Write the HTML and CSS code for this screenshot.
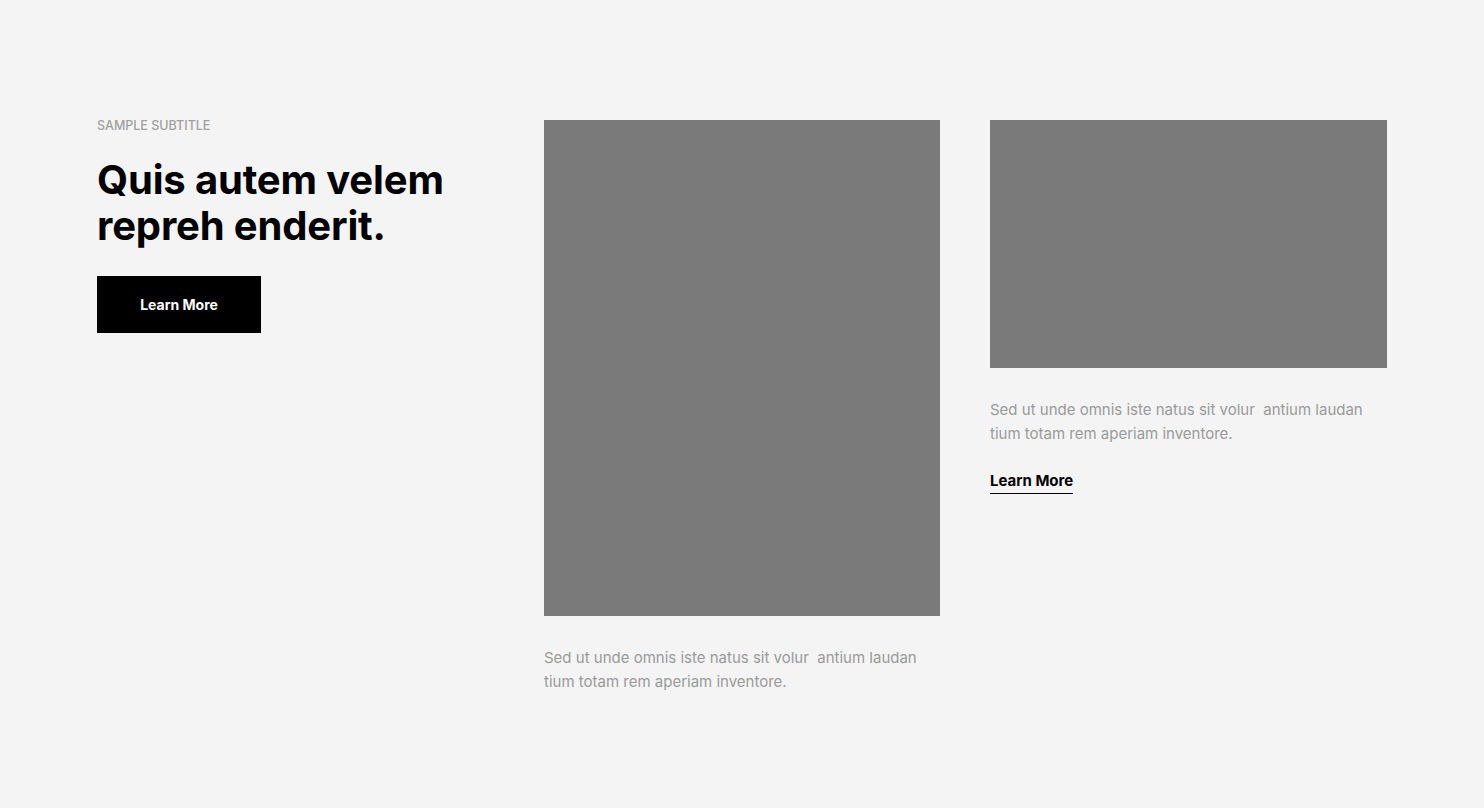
FILE: index.html
```html
<!DOCTYPE html>
<html lang="en">
<head>
<meta charset="utf-8">
<title>Section</title>
<link rel="stylesheet" href="styles.css">
</head>
<body>
<section class="section">
  <div class="intro">
    <p class="subtitle">SAMPLE SUBTITLE</p>
    <h1 class="title">Quis autem velem repreh enderit.</h1>
    <a class="btn" href="#">Learn More</a>
  </div>
  <div class="card">
    <div class="media media-tall"></div>
    <p class="card-text">Sed ut unde omnis iste natus sit volur&nbsp; antium laudan tium totam rem aperiam inventore.</p>
  </div>
  <div class="card">
    <div class="media media-short"></div>
    <p class="card-text">Sed ut unde omnis iste natus sit volur&nbsp; antium laudan tium totam rem aperiam inventore.</p>
    <a class="link" href="#">Learn More</a>
  </div>
</section>
</body>
</html>
```

FILE: styles.css
```css
* { box-sizing: border-box; }
html, body { margin: 0; padding: 0; }
body {
  background: #f4f4f4;
  font-family: Inter, "Noto Sans", sans-serif;
  color: #000;
  width: 1484px;
  height: 808px;
  overflow: hidden;
}
.section {
  display: grid;
  grid-template-columns: 397px 396px 397px;
  column-gap: 50px;
  padding: 120px 97px 0;
  align-items: start;
}
.intro { display: flex; flex-direction: column; align-items: flex-start; }
.subtitle {
  margin: 0;
  font-size: 12.5px;
  line-height: 12px;
  font-weight: 500;
  color: #a0a0a0;
}
.title {
  margin: 25px 0 0;
  font-size: 40px;
  line-height: 46px;
  font-weight: 700;
  letter-spacing: -0.15px;
  width: 390px;
}
.btn {
  margin-top: 27px;
  width: 164px;
  height: 57px;
  background: #000;
  color: #fff;
  font-size: 14px;
  font-weight: 700;
  text-decoration: none;
  display: flex;
  align-items: center;
  justify-content: center;
}
.card { display: flex; flex-direction: column; align-items: flex-start; }
.media { width: 100%; background: #7a7a7b; }
.media-tall { height: 496px; }
.media-short { height: 248px; }
.card-text {
  margin: 30px 0 0;
  font-size: 15px;
  line-height: 24px;
  color: #9a9a9a;
  width: 380px;
}
.link {
  margin-top: 25px;
  font-size: 15px;
  line-height: 20px;
  font-weight: 700;
  color: #000;
  text-decoration: none;
  padding-bottom: 2px;
  border-bottom: 1px solid #000;
}
```
